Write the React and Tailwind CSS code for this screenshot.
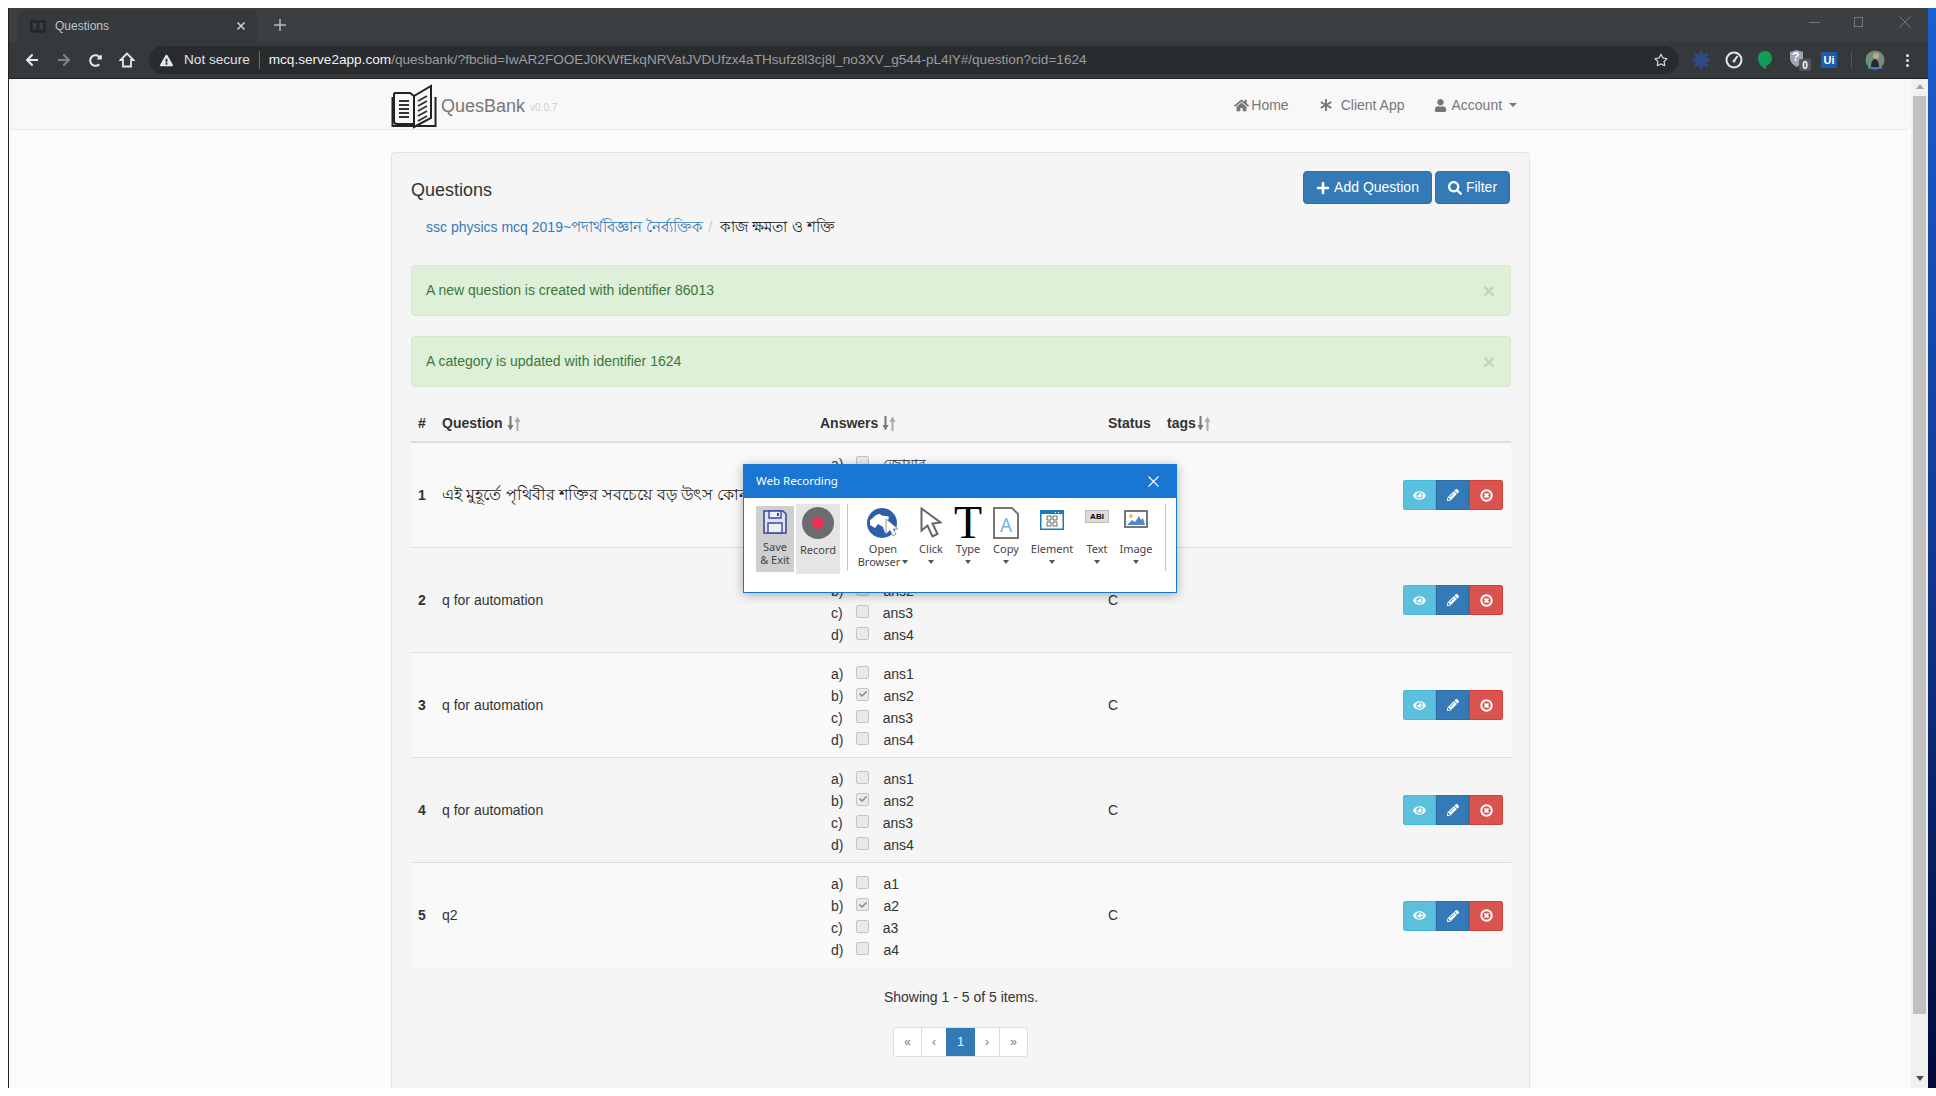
import { FaHome, FaAsterisk, FaUser, FaPlus, FaSearch, FaEye, FaPencilAlt, FaCheck, FaRegStar, FaArrowLeft, FaArrowRight, FaRedoAlt, FaExclamationTriangle } from "react-icons/fa";

const Sort = ({ className = "ml-[4px]" }) => (
  <svg width="14" height="17" viewBox="0 0 14 17" className={`inline-block ${className}`}>
    <path d="M2.500 1h2v9H6.500L3.500 15.500 0.500 10h2z" fill="#777" />
    <path d="M9.500 16h2V7h2L10.500 1.500 7.500 7h2z" fill="#aaa" />
  </svg>
);

const RemoveCircle = () => (
  <svg width="13" height="13" viewBox="0 0 13 13">
    <circle cx="6.5" cy="6.5" r="5.2" fill="none" stroke="#fff" strokeWidth="2" />
    <path d="M4.5 4.5l4 4M8.5 4.5l-4 4" stroke="#fff" strokeWidth="1.8" />
  </svg>
);

const Logo = () => (
  <svg width="46" height="46" viewBox="0 0 46 46" className="mt-[5px]">
    <path d="M4 9h15l4 3 0 28H6a3 3 0 0 1-3-3V10z" fill="#f8f8f8" stroke="#222" strokeWidth="2" />
    <path d="M1.5 13v29h43V13" fill="none" stroke="#222" strokeWidth="2" />
    <path d="M23 12L40 2v32L23 43z" fill="#f8f8f8" stroke="#222" strokeWidth="2" />
    <path d="M8 17h10M8 21h10M8 25h10M8 29h10M8 33h10" stroke="#333" strokeWidth="2" />
    <path d="M27 17l9-5M27 22l9-5M27 27l9-5M27 32l9-5M27 37l9-5" stroke="#333" strokeWidth="2" />
  </svg>
);

const TabBook = () => (
  <svg width="16" height="14" viewBox="0 0 16 14">
    <path d="M1 2h6l1 1 1-1h6v11H1z" fill="#2b2d30" stroke="#1a1b1d" />
    <path d="M3 5h3M3 7h3M3 9h3M10 5h3M10 7h3M10 9h3" stroke="#55585b" />
  </svg>
);

const ChromeToolbar = () => (
  <div className="flex h-[36px] items-center bg-[#35393c] text-[#d8dadb]">
    <FaArrowLeft className="ml-[16px] text-[14px] text-[#e6e8e9]" />
    <FaArrowRight className="ml-[18px] text-[14px] text-[#7f8386]" />
    <FaRedoAlt className="ml-[18px] text-[13px] text-[#e6e8e9]" />
    <svg width="16" height="16" viewBox="0 0 16 16" className="ml-[17px]">
      <path d="M8 1.5L1.5 8H4v6.5h8V8h2.5z" fill="none" stroke="#e6e8e9" strokeWidth="1.8" />
    </svg>
    <div className="ml-[14px] flex h-[28px] w-[1530px] items-center rounded-full bg-[#292c2f] pl-[11px]">
      <FaExclamationTriangle className="text-[13px] text-[#e6e8e9]" />
      <span className="ml-[11px] text-[13.6px] text-[#e0e2e3]">Not secure</span>
      <span className="ml-[9px] mr-[9px] h-[18px] w-px bg-[#6a6d70]" />
      <span className="text-[13.6px] whitespace-nowrap text-[#9a9da0]">
        <span className="text-[#f1f3f4]">mcq.serve2app.com</span>/quesbank/?fbclid=IwAR2FOOEJ0KWfEkqNRVatJVDUfzx4aTHsufz8l3cj8l_no3XV_g544-pL4lY#/question?cid=1624
      </span>
      <FaRegStar className="ml-auto mr-[11px] text-[14px] text-[#d8dadb]" />
    </div>
    <div className="flex flex-1 items-center">
      <svg width="18" height="18" viewBox="0 0 18 18" className="ml-[13px]">
        <path d="M9 0v18M0 9h18M2.500 2.500l13 13M15.500 2.500l-13 13" stroke="#2f4b86" strokeWidth="3" />
        <circle cx="9" cy="9" r="6" fill="#2f4b86" />
      </svg>
      <svg width="18" height="18" viewBox="0 0 18 18" className="ml-[15px]">
        <circle cx="9" cy="9" r="7.5" fill="none" stroke="#e6e6e6" strokeWidth="2" />
        <path d="M9 10l3.5-5" stroke="#e6e6e6" strokeWidth="2" />
        <circle cx="9" cy="10" r="1.5" fill="#e6e6e6" />
      </svg>
      <svg width="16" height="20" viewBox="0 0 16 20" className="ml-[14px]">
        <path d="M8 1c4 0 7 3 7 7s-3 7-6 8v3C5 18 1 13 1 8c0-4 3-7 7-7z" fill="#0f9d58" />
      </svg>
      <div className="relative ml-[16px] h-[22px] w-[22px]">
        <svg width="15" height="19" viewBox="0 0 15 19">
          <path d="M7.5 1l6.5 2v6c0 4-3 7-6.5 9C4 16 1 13 1 9V3z" fill="#9ea7b3" />
        </svg>
        <span className="absolute left-[3px] top-[1px] text-[12px] leading-[14px] font-bold text-white">?</span>
        <span className="absolute left-[10px] top-[10px] flex h-[12px] w-[12px] items-center justify-center rounded-[2px] bg-[#55585c] text-[10px] font-bold text-white">0</span>
      </div>
      <span className="ml-[10px] flex h-[16px] w-[16px] items-center justify-center bg-[#1c5fa8] text-[11px] font-bold text-white">Ui</span>
      <span className="ml-[14px] h-[16px] w-px bg-[#55585c]" />
      <svg width="20" height="20" viewBox="0 0 20 20" className="ml-[13px]">
        <circle cx="10" cy="10" r="9.5" fill="#6f8f7a" />
        <path d="M6 17c0-5 2-8 4-8s4 3 4 8z" fill="#25282c" />
        <circle cx="11" cy="6" r="3" fill="#c9a48a" />
        <path d="M3 17h14v2H3z" fill="#3f7fc2" />
      </svg>
      <span className="ml-[21px] flex flex-col gap-[2px]">
        <span className="h-[3px] w-[3px] rounded-full bg-[#e6e8e9]" />
        <span className="h-[3px] w-[3px] rounded-full bg-[#e6e8e9]" />
        <span className="h-[3px] w-[3px] rounded-full bg-[#e6e8e9]" />
      </span>
    </div>
  </div>
);

const ChromeTabs = () => (
  <div className="flex h-[34px] items-end bg-[#3b3f42] pl-[9px]">
    <div className="flex h-[32px] w-[240px] items-center rounded-t-[8px] bg-[#35393c] pl-[12px]">
      <TabBook />
      <span className="ml-[9px] text-[12px] text-[#c2c4c6]">Questions</span>
      <svg width="10" height="10" viewBox="0 0 10 10" className="ml-auto mr-[12px]">
        <path d="M1.5 1.5l7 7M8.5 1.5l-7 7" stroke="#d0d2d3" strokeWidth="1.5" />
      </svg>
    </div>
    <svg width="12" height="12" viewBox="0 0 12 12" className="mb-[11px] ml-[16px]">
      <path d="M6 0v12M0 6h12" stroke="#b9bbbd" strokeWidth="1.5" />
    </svg>
    <div className="mb-[14px] ml-auto flex items-center">
      <span className="h-px w-[11px] bg-[#77797c]" />
      <span className="ml-[34px] h-[10px] w-[9px] border border-[#77797c]" />
      <svg width="12" height="12" viewBox="0 0 12 12" className="ml-[36px] mr-[17px]">
        <path d="M0.5 0.5l11 11M11.5 0.5l-11 11" stroke="#77797c" />
      </svg>
    </div>
  </div>
);

const Navbar = () => (
  <div className="flex h-[51px] w-[1901px] shrink-0 rounded-[4px] border-b border-[#e7e7e7] bg-[#f8f8f8] pl-[382px] text-[14px] text-[#777]">
    <Logo />
    <span className="ml-[4px] mt-[17px] text-[18px] leading-[20px]">QuesBank</span>
    <span className="ml-[5px] mt-[23px] text-[10px] leading-[12px] text-[#ccc]">v0.0.7</span>
    <div className="ml-[677px] mt-[16px] flex h-[20px] items-center">
      <FaHome className="text-[15px]" />
      <span className="ml-[2px]">Home</span>
      <FaAsterisk className="ml-[31px] text-[12px]" />
      <span className="ml-[9px]">Client App</span>
      <FaUser className="ml-[29px] text-[13px]" />
      <span className="ml-[5px]">Account</span>
      <span className="ml-[7px] h-0 w-0 border-x-[4px] border-t-[4px] border-x-transparent border-t-[#777]" />
    </div>
  </div>
);

const Alert = ({ text, className }) => (
  <div className={`flex h-[51px] items-center justify-between rounded-[4px] border border-[#d6e9c6] bg-[#dff0d8] pl-[14px] pr-[15px] text-[14px] text-[#3c763d] ${className}`}>
    <span>{text}</span>
    <span className="text-[21px] leading-none font-bold text-[#3c763d] opacity-20">×</span>
  </div>
);

const Answer = ({ letter, text, checked }) => (
  <div className="flex h-[22px] items-center text-[14px] text-[#333]">
    <span>{letter}</span>
    <span className="mb-[4px] ml-[13px] flex h-[13px] w-[13px] items-center justify-center rounded-[2px] border border-[#c4c4c4] bg-[#e9e9e9]">
      {checked && <FaCheck className="text-[8px] text-[#8a8a8a]" />}
    </span>
    <span className="ml-[14px]">{text}</span>
  </div>
);

const Row = ({ num, question, answers, status, striped, last }) => (
  <div className={`grid h-[105px] grid-cols-[23px_378px_296px_1fr_auto] items-center text-[14px] text-[#333] ${last ? "" : "border-b border-[#ddd]"} ${striped ? "bg-[#f9f9f9]" : ""}`}>
    <span className="pl-[7px] font-bold">{num}</span>
    <span className="pl-[8px] whitespace-nowrap">{question}</span>
    <div className="pl-[19px] pt-[4px]">
      {answers.map((a, i) => (
        <Answer key={a} letter={"abcd"[i] + ")"} text={a} checked={i === 1} />
      ))}
    </div>
    <span>{status}</span>
    <div className="mr-[8px] flex h-[30px] overflow-hidden rounded-[3px]">
      <span className="flex w-[33px] items-center justify-center border border-[#46b8da] bg-[#5bc0de] text-[13px] text-white"><FaEye /></span>
      <span className="flex w-[33px] items-center justify-center border border-[#2e6da4] bg-[#337ab7] text-[12px] text-white"><FaPencilAlt /></span>
      <span className="flex w-[34px] items-center justify-center border border-[#d43f3a] bg-[#d9534f]"><RemoveCircle /></span>
    </div>
  </div>
);

const Caret = () => (
  <span className="inline-block h-0 w-0 border-x-[3.5px] border-t-[4px] border-x-transparent border-t-[#555]" />
);

const ToolItem = ({ width, icon, label, second }) => (
  <div className={`flex flex-col items-center ${width}`}>
    <div className="flex h-[38px] w-full items-center justify-center">{icon}</div>
    <span className="leading-[13px]">{label}</span>
    <span className="flex h-[13px] items-center gap-[2px] leading-[13px]">
      {second}
      <Caret />
    </span>
  </div>
);

const WebRecording = () => (
  <div className="absolute left-[743px] top-[464px] h-[129px] w-[434px] border border-[#1976d2] bg-white font-['Noto_Sans',sans-serif] text-[11px] text-[#444] shadow-[0_2px_10px_rgba(0,0,0,0.3)]">
    <div className="-mx-px -mt-px flex h-[34px] items-center justify-between bg-[#1976d2] pl-[13px] pr-[18px] text-[11.5px] text-white">
      <span>Web Recording</span>
      <svg width="11" height="11" viewBox="0 0 11 11">
        <path d="M0.5 0.5l10 10M10.5 0.5l-10 10" stroke="#fff" strokeWidth="1.1" />
      </svg>
    </div>
    <div className="flex h-[76px] items-start pl-[12px] pt-[6px]">
      <div className="mt-[2px] flex h-[66px] w-[38px] flex-col items-center bg-[#cfcfcf] pt-[4px] leading-[13px]">
        <svg width="24" height="24" viewBox="0 0 24 24" className="mb-[6px]">
          <path d="M1 1h19l3 3v19H1z" fill="#dfe1ee" stroke="#3c4a9c" strokeWidth="1.6" />
          <path d="M6 1h12v7H6z" fill="#eef" stroke="#3c4a9c" strokeWidth="1.4" />
          <path d="M14 3h2v3h-2z" fill="#3c4a9c" />
          <path d="M5 13h14v10H5z" fill="#eee" stroke="#3c4a9c" strokeWidth="1.4" />
        </svg>
        <span>Save</span>
        <span className="whitespace-nowrap">&amp; Exit</span>
      </div>
      <div className="ml-[2px] flex h-[70px] w-[44px] flex-col items-center bg-[#e5e5e5] pt-[3px]">
        <span className="flex h-[32px] w-[32px] items-center justify-center rounded-full bg-[#6c6c70]">
          <span className="h-[12px] w-[12px] rounded-full bg-[#ee2f52]" />
        </span>
        <span className="mt-[4px] leading-[13px]">Record</span>
      </div>
      <span className="ml-[7px] h-[67px] w-px bg-[#c4c4c4]" />
      <ToolItem
        width="ml-[2px] w-[66px]"
        label="Open"
        second="Browser"
        icon={
          <svg width="34" height="32" viewBox="0 0 34 32">
            <circle cx="16" cy="16" r="15" fill="#2f5ea8" />
            <path d="M4 13c4-2 5-6 10-6 2 3 7 1 9 3l-2 7 2 6-4 3-2-6-5-3-3 4-5-3z" fill="#fff" />
            <path d="M20 12v15l4-4 3 6 3-2-3-5h5z" fill="#fff" stroke="#999" />
          </svg>
        }
      />
      <ToolItem
        width="w-[30px]"
        label="Click"
        icon={
          <svg width="22" height="32" viewBox="0 0 22 32">
            <path d="M1.5 1.5v22l6-5 5 11 5-2.5-5-10.500 8-1z" fill="#fff" stroke="#666" strokeWidth="2" />
          </svg>
        }
      />
      <ToolItem
        width="w-[44px]"
        label="Type"
        icon={<span className="font-['Liberation_Serif',serif] text-[46px] leading-[34px] text-black">T</span>}
      />
      <ToolItem
        width="w-[32px]"
        label="Copy"
        icon={
          <div className="relative h-[32px] w-[26px]">
            <svg width="26" height="32" viewBox="0 0 26 32">
              <path d="M1 1h18l6 6v24H1z" fill="#fff" stroke="#777" strokeWidth="2" />
            </svg>
            <span className="absolute inset-x-0 top-[8px] text-center text-[19px] leading-[20px] text-[#6fb5e6]">A</span>
          </div>
        }
      />
      <ToolItem
        width="w-[60px]"
        label="Element"
        icon={
          <svg width="24" height="20" viewBox="0 0 24 20" className="mb-[6px]">
            <path d="M0 0h24v20H0z" fill="#1e7ab8" />
            <path d="M1.500 4h21v14.500h-21z" fill="#fff" />
            <path d="M7 6h4v4H7zM13 6h4v4h-4zM7 12h4v4H7zM13 12h4v4h-4z" fill="none" stroke="#666" />
            <path d="M15 2h1v1h-1zM18 2h1v1h-1z" fill="#fff" />
            <path d="M21 2h1v1h-1z" fill="#e33" />
          </svg>
        }
      />
      <ToolItem
        width="w-[30px]"
        label="Text"
        icon={
          <span className="mb-[13px] flex h-[13px] w-[24px] items-center justify-center border border-[#bbb] bg-[#ddd] font-['Liberation_Sans',sans-serif] text-[8px] font-bold text-black">ABI</span>
        }
      />
      <ToolItem
        width="w-[48px]"
        label="Image"
        icon={
          <svg width="24" height="18" viewBox="0 0 24 18" className="mb-[9px]">
            <path d="M1 1h22v16H1z" fill="#fff" stroke="#777" strokeWidth="2" />
            <path d="M3 15l5-5 3 2 4-6 2 4 2-2 2 7z" fill="#4f87c9" />
            <circle cx="7" cy="6" r="2" fill="#f2c14e" />
          </svg>
        }
      />
      <span className="ml-[5px] h-[67px] w-px bg-[#c4c4c4]" />
    </div>
  </div>
);

const Scrollbar = () => (
  <div className="flex w-[17px] shrink-0 flex-col items-center bg-[#f1f1f1] pt-[5px]">
    <span className="h-0 w-0 border-x-[4px] border-b-[5px] border-x-transparent border-b-[#a3a3a3]" />
    <span className="mt-[7px] h-[918px] w-[13px] bg-[#c1c1c1]" />
    <span className="mt-[62px] h-0 w-0 border-x-[4px] border-t-[5px] border-x-transparent border-t-[#505050]" />
  </div>
);

const Pagination = () => (
  <div className="ml-[482px] mt-[20px] flex h-[30px] w-[135px] overflow-hidden rounded-[3px] border border-[#ddd] bg-white text-[12px] text-[#777]">
    <span className="flex w-[28px] items-center justify-center border-r border-[#ddd]">«</span>
    <span className="flex w-[24px] items-center justify-center">‹</span>
    <span className="flex w-[29px] items-center justify-center bg-[#337ab7] text-white">1</span>
    <span className="flex w-[25px] items-center justify-center border-r border-[#ddd]">›</span>
    <span className="flex flex-1 items-center justify-center">»</span>
  </div>
);

const App = () => {
  const ans = ["ans1", "ans2", "ans3", "ans4"];

  return (
    <div className="relative flex h-[1096px] w-[1936px] overflow-hidden bg-white pl-[8px] pt-[8px] font-['Liberation_Sans','Noto_Sans',sans-serif]">
      <div className="flex h-[1080px] w-[1920px] flex-col border-l border-[#222]">
        <ChromeTabs />
        <ChromeToolbar />
        <div className="flex min-h-0 flex-1 border-t border-[#202124] bg-[#fbfbfb]">
          <div className="min-w-0 flex-1 overflow-hidden">
            <Navbar />
            <div className="ml-[382px] mt-[22px] h-[1000px] w-[1139px] rounded-[4px] border border-[#e3e3e3] bg-[#f5f5f5] pl-[19px] pr-[18px] pt-[18px]">
              <div className="flex h-[33px] items-center justify-between">
                <h3 className="pt-[5px] text-[18px] text-[#333]">Questions</h3>
                <div className="mr-[1px] flex gap-[3px] text-[14px] text-white">
                  <span className="flex h-[33px] w-[129px] items-center justify-center gap-[4px] rounded-[4px] border border-[#2e6da4] bg-[#337ab7]"><FaPlus className="text-[14px]" /> Add Question</span>
                  <span className="flex h-[33px] w-[75px] items-center justify-center gap-[4px] rounded-[4px] border border-[#2e6da4] bg-[#337ab7]"><FaSearch className="text-[14px]" /> Filter</span>
                </div>
              </div>
              <div className="mt-[13px] flex h-[20px] items-center pl-[15px] text-[14px] whitespace-nowrap">
                <span className="text-[#337ab7]">ssc physics mcq 2019~<span className="text-[15px]">পদার্থবিজ্ঞান নৈর্ব্যক্তিক</span></span>
                <span className="mx-[5px] text-[#ccc]">/</span>
                <span className="ml-[3px] text-[15px] text-[#222]">কাজ ক্ষমতা ও শক্তি</span>
              </div>
              <Alert className="mt-[28px]" text="A new question is created with identifier 86013" />
              <Alert className="mt-[20px]" text="A category is updated with identifier 1624" />
              <div className="grid h-[56px] grid-cols-[23px_386px_288px_59px_1fr] items-end border-b-2 border-[#ddd] pb-[7px] text-[14px] font-bold text-[#333]">
                <span className="pl-[7px]">#</span>
                <span className="flex items-center pl-[8px]">Question <Sort /></span>
                <span className="flex items-center">Answers <Sort /></span>
                <span>Status</span>
                <span className="flex items-center">tags<Sort className="ml-[1px]" /></span>
              </div>
              <Row striped num="1" question={<span className="text-[15.5px] text-[#222]">এই মুহূর্তে পৃথিবীর শক্তির সবচেয়ে বড় উৎস কোনটি</span>} status="C" answers={["জোয়ার", "সূর্য", "কয়লা", "তেল"]} />
              <Row num="2" question="q for automation" status="C" answers={ans} />
              <Row striped num="3" question="q for automation" status="C" answers={ans} />
              <Row num="4" question="q for automation" status="C" answers={ans} />
              <Row striped last num="5" question="q2" status="C" answers={["a1", "a2", "a3", "a4"]} />
              <p className="mt-[19px] text-center text-[14px] leading-[20px] text-[#333]">Showing 1 - 5 of 5 items.</p>
              <Pagination />
            </div>
          </div>
          <Scrollbar />
        </div>
      </div>
      <div className="h-[1080px] w-[8px] bg-linear-to-b from-[#1a5fd0] via-[#123a94] to-[#030a3a]" />
      <WebRecording />
    </div>
  );
};

export default App;
